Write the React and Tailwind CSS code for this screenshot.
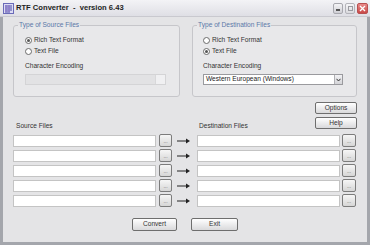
import React from "react";

const font = { fontFamily: "'Liberation Sans', Arial, sans-serif" };

function Radio({ checked, label }) {
  return (
    <div className="flex items-center h-[11px]">
      <span className="w-[7px] h-[7px] rounded-full border border-[#6b6b6b] bg-white flex items-center justify-center">
        {checked && <span className="w-[3px] h-[3px] rounded-full bg-[#555]" />}
      </span>
      <span className="ml-[2px] text-[#333]">{label}</span>
    </div>
  );
}

function Browse() {
  return (
    <button className="w-full h-[13px] rounded-[2px] border border-[#7c7c7c] bg-gradient-to-b from-[#f6f6f6] to-[#d6d6d6] flex items-end justify-center pb-[2px] text-[5px] leading-none text-[#555]">
      ...
    </button>
  );
}

function Arrow() {
  return (
    <svg width="25" height="12" viewBox="0 0 25 12">
      <line x1="5" y1="6" x2="15" y2="6" stroke="#222" strokeWidth="1" />
      <path d="M14 3.5 L18 6 L14 8.5 Z" fill="#222" />
    </svg>
  );
}

function FileRow() {
  return (
    <div className="flex items-center h-[12px]">
      <div className="w-[143px] h-[12px] bg-white border border-[#c4c4c4]" />
      <div className="ml-[3px] w-[13px]"><Browse /></div>
      <Arrow />
      <div className="w-[143px] h-[12px] bg-white border border-[#c4c4c4]" />
      <div className="ml-[2px] w-[14px]"><Browse /></div>
    </div>
  );
}

function PushButton({ children, className }) {
  return (
    <button
      className={
        "h-[12px] rounded-[2px] border border-[#6e6e6e] bg-gradient-to-b from-[#ffffff] to-[#d9d9db] text-[#333] leading-none flex items-center justify-center " +
        className
      }
    >
      {children}
    </button>
  );
}

export default function App() {
  return (
    <div
      className="w-[370px] h-[245px] flex flex-col bg-[#e4e4e6] text-[6.6px] leading-none text-[#333] overflow-hidden"
      style={font}
    >
      {/* title bar */}
      <div className="h-[17px] flex items-center bg-gradient-to-b from-[#f3f3f6] to-[#dfdfe5] border-b border-[#c9c9cf] px-[2px]">
        <svg width="11" height="11" viewBox="0 0 11 11" className="ml-[1px]">
          <rect x="0.5" y="0.5" width="10" height="10" fill="#dcdcf4" stroke="#6a6ab8" />
          <path d="M2 3h7M2 5h7M2 7h7M2 9h5" stroke="#4a4aa8" strokeWidth="1" />
          <path d="M3 2v7M6 2v7" stroke="#8a6ac8" strokeWidth="0.8" />
        </svg>
        <span className="ml-[2px] font-bold text-[7.6px] text-[#1e1e1e] whitespace-pre">RTF Converter  -  version 6.43</span>
        <div className="ml-auto flex items-center gap-[2px]">
          <div className="w-[10px] h-[11px] rounded-[2px] border border-[#a8a8ae] bg-gradient-to-b from-[#f4f4f6] to-[#cfcfd5] flex items-end justify-center pb-[2px]">
            <span className="w-[4px] h-[1.5px] bg-[#555]" />
          </div>
          <div className="w-[10px] h-[11px] rounded-[2px] border border-[#b4b4ba] bg-gradient-to-b from-[#f6f6f8] to-[#dadade] flex items-center justify-center">
            <span className="w-[5px] h-[5px] border border-[#9a9aa0]" />
          </div>
          <div className="w-[11px] h-[11px] rounded-[2px] border border-[#b85050] bg-gradient-to-b from-[#e88a8a] to-[#c94848] flex items-center justify-center">
            <svg width="7" height="7" viewBox="0 0 7 7">
              <path d="M1 1L6 6M6 1L1 6" stroke="#fff" strokeWidth="1.3" />
            </svg>
          </div>
        </div>
      </div>

      {/* body */}
      <div className="flex-1 flex flex-col border-l-[3px] border-r-[3px] border-b-[3px] border-[#a4a6ac] px-[10px]">
        <div className="flex gap-[12px] mt-[5px]">
          <fieldset className="w-[167px] h-[75px] border border-[#c6c6ca] rounded-[3px] px-[4px] bg-[#e8e8ea]">
            <legend className="px-[1px] text-[#5a78a8]">Type of Source Files</legend>
            <div className="pl-[7px] mt-[6px]">
              <Radio checked label="Rich Text Format" />
              <Radio label="Text File" />
              <div className="mt-[6px]">Character Encoding</div>
              <div className="mt-[5px] w-[141px] h-[11px] border border-[#d4d4d6] bg-[#e2e2e4] flex justify-end">
                <div className="w-[10px] h-full bg-[#f0f0f2] border-l border-[#d8d8da]" />
              </div>
            </div>
          </fieldset>
          <fieldset className="w-[165px] h-[75px] border border-[#c6c6ca] rounded-[3px] px-[4px] bg-[#e8e8ea]">
            <legend className="px-[1px] text-[#5a78a8]">Type of Destination Files</legend>
            <div className="pl-[6px] mt-[6px]">
              <Radio label="Rich Text Format" />
              <Radio checked label="Text File" />
              <div className="mt-[6px]">Character Encoding</div>
              <div className="mt-[5px] w-[140px] h-[11px] border border-[#9a9a9e] bg-white flex items-center">
                <span className="pl-[2px] text-[#222]">Western European (Windows)</span>
                <div className="ml-auto w-[8px] h-full bg-gradient-to-b from-[#f2f2f4] to-[#d4d4d8] border-l border-[#b0b0b4] flex items-center justify-center">
                  <svg width="5" height="4" viewBox="0 0 5 4">
                    <path d="M0.5 0.8L2.5 3L4.5 0.8" stroke="#333" strokeWidth="1" fill="none" />
                  </svg>
                </div>
              </div>
            </div>
          </fieldset>
        </div>

        <div className="flex justify-end mt-[5px]">
          <PushButton className="w-[42px]">Options</PushButton>
        </div>
        <div className="flex items-start mt-[3px]">
          <span className="mt-[6px] ml-[3px] w-[183px]">Source Files</span>
          <span className="mt-[6px]">Destination Files</span>
          <PushButton className="ml-auto w-[42px]">Help</PushButton>
        </div>

        <div className="flex flex-col gap-[3px] mt-[5px]">
          <FileRow />
          <FileRow />
          <FileRow />
          <FileRow />
          <FileRow />
        </div>

        <div className="flex justify-center gap-[14px] mt-[11px]">
          <PushButton className="w-[45px] h-[13px]">Convert</PushButton>
          <PushButton className="w-[47px] h-[13px]">Exit</PushButton>
        </div>
      </div>
    </div>
  );
}
